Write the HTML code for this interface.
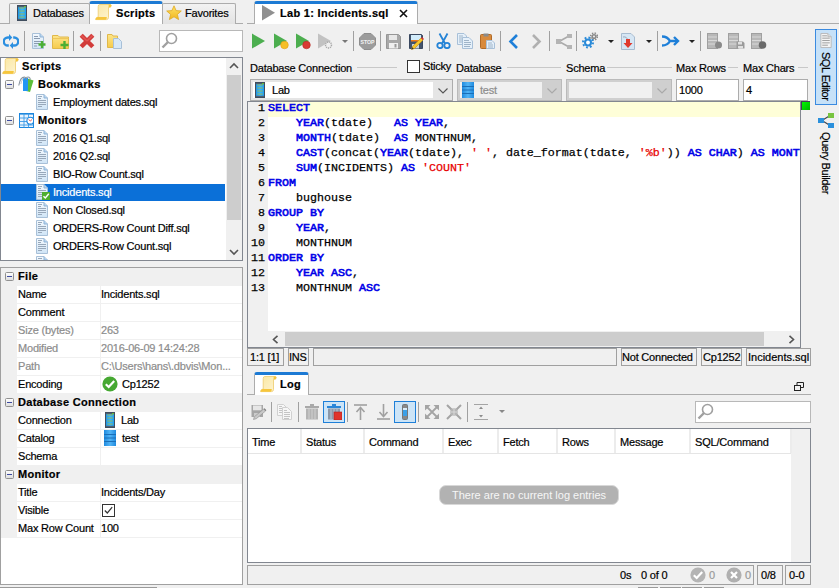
<!DOCTYPE html>
<html><head><meta charset="utf-8">
<style>
*{box-sizing:border-box;margin:0;padding:0}
html,body{width:839px;height:588px;overflow:hidden;background:#f0f0f0;font-family:"Liberation Sans",sans-serif;font-size:11px;color:#000;position:relative}
.a{position:absolute}
.t{position:absolute;white-space:pre;line-height:14px;letter-spacing:-0.2px;-webkit-text-stroke:0.2px}
.b{font-weight:bold;letter-spacing:0.3px}
.bb{font-weight:bold;letter-spacing:0.3px}
.sep{position:absolute;width:1px;background:#a0a0a0}
svg{position:absolute;overflow:visible}
.tab{position:absolute;border:1px solid #acacac;border-bottom:none;background:linear-gradient(#f2f2f2,#e3e3e3);border-radius:2px 2px 0 0}
.tabA{position:absolute;background:#fff;border:1px solid #acacac;border-bottom:none;border-top:3px solid #1c7ad4;border-radius:3px 3px 0 0}
.code{position:absolute;left:0;white-space:pre;font-family:"Liberation Mono",monospace;font-size:11.67px;line-height:15px;color:#000;-webkit-text-stroke:0.25px}
.code b{font-weight:normal;letter-spacing:0;-webkit-text-stroke:0.6px}
.lnum{position:absolute;left:248px;width:17px;text-align:right;font-family:"Liberation Mono",monospace;font-size:11.67px;line-height:15px;color:#000;-webkit-text-stroke:0.25px}
.kw{color:#0000e8}
.str{color:#e80000}
.cell{position:absolute;border:1px solid #a0a0a0;height:18px}
.cbx{position:absolute;border:1px solid #acacac;background:#fff}
.lbl{position:absolute;white-space:pre;line-height:14px;letter-spacing:-0.2px;-webkit-text-stroke:0.2px}
.hl{position:absolute;height:1px;background:#c8c8c8}
.th{position:absolute;top:429px;height:24px;border-right:1px solid #e5e5e5}
</style></head><body>

<svg width="0" height="0" style="position:absolute">
<defs>
<linearGradient id="gfile" x1="0" y1="0" x2="0" y2="1"><stop offset="0" stop-color="#f4f9fe"/><stop offset="1" stop-color="#cfe4f6"/></linearGradient>
<linearGradient id="gscroll" x1="0" y1="0" x2="1" y2="1"><stop offset="0" stop-color="#fbe7a0"/><stop offset="1" stop-color="#fdf4d4"/></linearGradient>
<linearGradient id="gbtn" x1="0" y1="0" x2="0" y2="1"><stop offset="0" stop-color="#ffffff"/><stop offset="1" stop-color="#dcdcdc"/></linearGradient>
<linearGradient id="gfold" x1="0" y1="0" x2="0" y2="1"><stop offset="0" stop-color="#fde68a"/><stop offset="1" stop-color="#f6c94a"/></linearGradient>
<symbol id="ifile" viewBox="0 0 12 16">
 <path d="M0.5 0.5H8L11.5 4V15.5H0.5Z" fill="url(#gfile)" stroke="#a8c0d8"/>
 <path d="M8 0.5V4H11.5" fill="#b9d6f0" stroke="#8fb3d6"/>
 <path d="M2 2.5h4M2 4.5h3M2 6.5h8M2 8.5h8M2 10.5h8M2 12.5h4" stroke="#98a8ba" stroke-width="1"/>
</symbol>
<symbol id="icheck" viewBox="0 0 8 8">
 <rect x="0" y="0" width="8" height="8" fill="#4fae2f"/>
 <path d="M1.5 4.2L3.3 6L6.8 1.8" fill="none" stroke="#fff" stroke-width="1.4"/>
</symbol>
<symbol id="iscroll" viewBox="0 0 17 17">
 <path d="M4.5 0.5H15.5Q16.6 0.7 16 2.2L15.4 3.2H13.5V13.2Q13.5 15.6 11.5 15.6H0.6L1 14.2Q1.4 13.2 3.2 13.2V2.5Q3.4 0.5 4.5 0.5Z" fill="url(#gscroll)" stroke="#efcf78" stroke-width="0.9"/>
 <path d="M0.6 15.8L1 14.2Q1.4 13 3.2 13H11.8Q11.8 15.8 10.5 15.8Z" fill="#f6c63c"/>
 <path d="M13.6 0.5H15.6Q16.7 0.8 16.1 2.2L15.5 3.3H13.6Z" fill="#f6c63c"/>
</symbol>
<symbol id="ibook" viewBox="0 0 16 16">
 <path d="M9.5 2.5L15.5 4.5L12 16L8 15Z" fill="#5cbf3a"/>
 <path d="M5 2H10V15H5Z" fill="#2196f3"/>
 <path d="M0.8 9.5C1.5 5 3.5 0.8 7 1.2C8.5 1.4 8.6 2.6 7.8 3.6" fill="none" stroke="#8c96a0" stroke-width="1.1"/>
 <path d="M8.2 1.6C10 0.6 12.6 0.8 12.2 3.8" fill="none" stroke="#8c96a0" stroke-width="1.1"/>
 <path d="M2.8 8C3.5 4.5 5 2.5 6.5 2.2" fill="none" stroke="#b4bcc4" stroke-width="0.9"/>
</symbol>
<symbol id="imon" viewBox="0 0 15 15">
 <rect x="0.5" y="0.5" width="14" height="14" fill="#eaf4fd" stroke="#1b86de"/>
 <rect x="0" y="0" width="15" height="1.6" fill="#1b86de"/>
 <path d="M0.5 5h14M0.5 8.5h14M0.5 12h14M5 0.5v14M9.5 0.5v14" stroke="#3d9ae6" stroke-width="0.9"/>
 <circle cx="11.3" cy="7.7" r="3.4" fill="#fff" stroke="#1b86de" stroke-width="1.1"/>
 <path d="M9.6 6.6L11.3 7.9L13 6.6" fill="none" stroke="#e05a5a" stroke-width="1"/>
</symbol>
<symbol id="iminus" viewBox="0 0 9 9">
 <rect x="0.5" y="0.5" width="8" height="8" rx="1" fill="url(#gbtn)" stroke="#909090"/>
 <path d="M2 4.5h5" stroke="#3c4aa0" stroke-width="1"/>
</symbol>
</defs></svg>
<svg width="0" height="0" style="position:absolute">
<defs>
<linearGradient id="gdb" x1="0" y1="0" x2="1" y2="0"><stop offset="0" stop-color="#1f8be0"/><stop offset="0.5" stop-color="#52b4f5"/><stop offset="1" stop-color="#1f8be0"/></linearGradient>
<linearGradient id="gsrv" x1="0" y1="0" x2="1" y2="0"><stop offset="0" stop-color="#1e90e0"/><stop offset="0.5" stop-color="#3ab8fa"/><stop offset="1" stop-color="#1a9af0"/></linearGradient>
<symbol id="icircheck" viewBox="0 0 16 16">
 <circle cx="8" cy="8" r="7.6" fill="#46a832"/>
 <path d="M3.8 8.2L6.7 11L12.2 5" fill="none" stroke="#fff" stroke-width="2.2"/>
</symbol>
<symbol id="iserver" viewBox="0 0 10 16">
 <rect x="0.5" y="0.5" width="9" height="15" fill="url(#gsrv)" stroke="#3f4d5e"/>
 <rect x="1" y="1" width="8" height="1.2" fill="#4f5f70"/>
 <rect x="1" y="13.8" width="8" height="1.2" fill="#4f5f70"/>
 <path d="M2.2 3h5.6M2.2 6h5.6M2.2 9h5.6M2.2 12h5.6" stroke="#a3b84a" stroke-width="0.9"/>
 <circle cx="8" cy="1.8" r="0.7" fill="#8f0"/>
</symbol>
<symbol id="idb" viewBox="0 0 12 16">
 <rect x="0" y="0" width="12" height="16" fill="url(#gdb)"/>
 <path d="M0 4.5h12M0 8h12M0 11.5h12" stroke="#1a6fb8" stroke-width="1"/>
</symbol>
<symbol id="icb" viewBox="0 0 13 13">
 <rect x="0.5" y="0.5" width="12" height="12" fill="#fff" stroke="#333"/>
 <path d="M2.8 6.5L5.3 9L10.2 3.2" fill="none" stroke="#333" stroke-width="1.2"/>
</symbol>
</defs></svg>

<svg width="0" height="0" style="position:absolute">
<defs>
<linearGradient id="gstar" x1="0" y1="0" x2="0" y2="1"><stop offset="0" stop-color="#fde36a"/><stop offset="1" stop-color="#f2b61c"/></linearGradient>
<linearGradient id="gfolder" x1="0" y1="0" x2="0" y2="1"><stop offset="0" stop-color="#fde58a"/><stop offset="1" stop-color="#f6cb4c"/></linearGradient>
<symbol id="istar" viewBox="0 0 16 16">
 <path d="M8 0.8L10.1 5.6L15.3 6L11.4 9.4L12.6 14.6L8 11.8L3.4 14.6L4.6 9.4L0.7 6L5.9 5.6Z" fill="url(#gstar)" stroke="#e0a820" stroke-width="0.8"/>
</symbol>
<symbol id="irefresh" viewBox="0 0 16 16">
 <path d="M6.2 3.5H4.8A4 4 0 0 0 4.8 11.5H5.8" fill="none" stroke="#2b8fe0" stroke-width="2.3"/>
 <path d="M9.8 11.5H11.2A4 4 0 0 0 11.2 3.5H10.2" fill="none" stroke="#2b8fe0" stroke-width="2.3"/>
 <path d="M6 0L9.3 3.5L6 7Z" fill="#2b8fe0"/>
 <path d="M10 8L6.7 11.5L10 15Z" fill="#2b8fe0"/>
</symbol>
<symbol id="inewfile" viewBox="0 0 14 16">
 <path d="M0.5 0.5H8L11.5 4V15.5H0.5Z" fill="url(#gfile)" stroke="#a8c0d8"/>
 <path d="M8 0.5V4H11.5" fill="#b9d6f0" stroke="#8fb3d6"/>
 <path d="M2 3.5h4M2 5.5h6M2 8.5h7M2 10.5h5M2 13h3" stroke="#8b9bb0"/>
 <path d="M6.5 11.5h7M10 8v7" stroke="#4caf35" stroke-width="2.4"/>
</symbol>
<symbol id="inewfolder" viewBox="0 0 17 15">
 <path d="M0.5 1.5H6L7.5 3H16.5V14.5H0.5Z" fill="url(#gfolder)" stroke="#e0b84a"/>
 <path d="M0.5 4.5H16.5" stroke="#eec65a"/>
 <path d="M8.5 11h8M12.5 7v8" stroke="#4caf35" stroke-width="2.4"/>
</symbol>
<symbol id="ix" viewBox="0 0 16 16">
 <path d="M2.2 2.2L13.8 13.8M13.8 2.2L2.2 13.8" stroke="#d23c3a" stroke-width="4.4"/>
 <path d="M2.2 2.2L8 8M13.8 2.2L8 8" stroke="#e25552" stroke-width="1.6"/>
</symbol>
<symbol id="icopyfolder" viewBox="0 0 15 16">
 <path d="M0.5 1.5H5L6 3H10.5V14.5H0.5Z" fill="url(#gfolder)" stroke="#e0b84a"/>
 <path d="M6.5 5.5H11.5L14.5 8.5V15.5H6.5Z" fill="#d6e8f8" stroke="#a8c0d8"/>
</symbol>
<symbol id="isearch" viewBox="0 0 17 17">
 <circle cx="10.5" cy="6.5" r="5" fill="#fff" stroke="#a0a0a0" stroke-width="1.6"/>
 <path d="M7 10L1.5 15.5" stroke="#a0a0a0" stroke-width="2.4"/>
</symbol>
</defs></svg>

<svg width="0" height="0" style="position:absolute">
<defs>
<symbol id="isave" viewBox="0 0 15 15">
 <path d="M0.5 0.5H12.5L14.5 2.5V14.5H0.5Z" fill="#a8a8a8" stroke="#969696"/>
 <rect x="3" y="1" width="8" height="5" fill="#e8e8e8"/>
 <rect x="3" y="9" width="9" height="5.5" fill="#f0f0f0"/>
 <rect x="8.5" y="10" width="2" height="3.5" fill="#9a9a9a"/>
</symbol>
<symbol id="isaveedit" viewBox="0 0 16 16">
 <path d="M0.5 0.5H12.5L13.5 1.5V14.5H0.5Z" fill="#44546c" stroke="#3a4860"/>
 <rect x="2" y="1" width="10" height="5" fill="#d2ecfb"/>
 <rect x="2" y="6" width="10" height="1.5" fill="#f07a1a"/>
 <rect x="3" y="10" width="7" height="4.5" fill="#c8d0da"/>
 <path d="M2.5 15.5L3.5 12.5L12 4L14 6L5.5 14.5Z" fill="#f7c52a" stroke="#c08a10" stroke-width="0.6"/>
 <path d="M12 4L13 3L15 5L14 6Z" fill="#d83030"/>
 <path d="M2.5 15.5L3.2 13.2L4.8 14.8Z" fill="#333"/>
</symbol>
<symbol id="icut" viewBox="0 0 15 16">
 <path d="M3.5 0.5L9 10.5M11.5 0.5L6 10.5" stroke="#2483d6" stroke-width="1.8"/>
 <circle cx="4" cy="12.5" r="2.7" fill="none" stroke="#2483d6" stroke-width="1.8"/>
 <circle cx="11" cy="12.5" r="2.7" fill="none" stroke="#2483d6" stroke-width="1.8"/>
</symbol>
<symbol id="icopy" viewBox="0 0 16 16">
 <path d="M0.5 0.5H7L9.5 3V11.5H0.5Z" fill="#e5f0fa" stroke="#a8c0d8"/>
 <path d="M2 3h4M2 5h6M2 7h6M2 9h5" stroke="#9fb4c8"/>
 <path d="M5.5 4.5H12L15.5 8V15.5H5.5Z" fill="#e5f0fa" stroke="#a8c0d8"/>
 <path d="M7 7.5h5M7 9.5h7M7 11.5h7M7 13.5h6" stroke="#9fb4c8"/>
</symbol>
<symbol id="ipaste" viewBox="0 0 15 16">
 <rect x="0.5" y="1.5" width="11" height="14" rx="1" fill="#d88a3c" stroke="#b06a28"/>
 <rect x="3.5" y="0.5" width="5" height="3" fill="#8a8a8a"/>
 <path d="M6.5 7.5H12L14.5 10V15.5H6.5Z" fill="#e5f0fa" stroke="#a8c0d8"/>
 <path d="M8 10h4M8 12h5M8 14h5" stroke="#9fb4c8"/>
</symbol>
<symbol id="igears" viewBox="0 0 16 17">
 <circle cx="12" cy="4.5" r="2.6" fill="#8a8a8a"/>
 <circle cx="12" cy="4.5" r="3.4" fill="none" stroke="#8a8a8a" stroke-width="1.6" stroke-dasharray="1.4 1.3"/>
 <circle cx="12" cy="4.5" r="1" fill="#f0f0f0"/>
 <circle cx="6" cy="10.5" r="4" fill="#2a8ad8"/>
 <circle cx="6" cy="10.5" r="5" fill="none" stroke="#2a8ad8" stroke-width="2" stroke-dasharray="1.8 2.1"/>
 <circle cx="6" cy="10.5" r="1.9" fill="#fff"/>
</symbol>
<symbol id="iexport" viewBox="0 0 14 17">
 <path d="M0.5 0.5H10L13.5 4V16.5H0.5Z" fill="#d6e6f4" stroke="#a8bcd0"/>
 <path d="M2 4Q6 3 7 8" fill="none" stroke="#9ab" stroke-width="1"/>
 <path d="M5 6H9V10H11.5L7 15L2.5 10H5Z" fill="#e03a2e"/>
</symbol>
<symbol id="idbg1" viewBox="0 0 15 16">
 <rect x="0.5" y="0.5" width="10" height="15" fill="#b8b8b8" stroke="#a0a0a0"/>
 <path d="M1 4h9M1 7.5h9M1 11h9" stroke="#d8d8d8"/>
 <circle cx="11.5" cy="12" r="3.5" fill="#8a8a8a"/>
</symbol>
<symbol id="idbg2" viewBox="0 0 17 16">
 <rect x="0.5" y="0.5" width="10" height="15" fill="#b8b8b8" stroke="#a0a0a0"/>
 <path d="M1 4h9M1 7.5h9M1 11h9" stroke="#d8d8d8"/>
 <path d="M8.5 8.5H15L16.5 10V15.5H8.5Z" fill="#9a9a9a"/>
 <rect x="10" y="9" width="4" height="2.5" fill="#e0e0e0"/>
 <rect x="10" y="13" width="5" height="2.5" fill="#e0e0e0"/>
</symbol>
<symbol id="idbg3" viewBox="0 0 16 16">
 <rect x="0.5" y="0.5" width="10" height="15" fill="#b8b8b8" stroke="#a0a0a0"/>
 <path d="M1 4h9M1 7.5h9M1 11h9" stroke="#d8d8d8"/>
 <circle cx="11.5" cy="12" r="3.8" fill="#6a6a6a"/>
</symbol>
<symbol id="iqb" viewBox="0 0 16 15">
 <path d="M4 7.5L12 2.5M4 7.5L12 12.5" stroke="#3a4450" stroke-width="1.1"/>
 <rect x="0" y="5" width="6" height="5" fill="#2a90dc"/>
 <rect x="10" y="0" width="6" height="5" fill="#78c440"/>
 <rect x="10" y="10" width="6" height="5" fill="#2a90dc"/>
</symbol>
<symbol id="ilogcut" viewBox="0 0 16 16">
 <rect x="0" y="0" width="16" height="16" fill="none"/>
</symbol>
</defs></svg>
<svg width="0" height="0" style="position:absolute">
<defs>
<symbol id="isaveeditg" viewBox="0 0 16 16">
 <rect x="0.5" y="1" width="11.5" height="12" fill="#a6a6a6"/>
 <rect x="2" y="1.5" width="8.5" height="4.5" fill="#e6e6e6"/>
 <rect x="2" y="6" width="8.5" height="1" fill="#b8b8b8"/>
 <rect x="3" y="9" width="6" height="4" fill="#cccccc"/>
 <path d="M2.5 15.5L3.3 12.8L12.6 5L14.6 7L5.3 14.7Z" fill="#c8c8c8" stroke="#8e8e8e" stroke-width="0.6"/>
 <path d="M12.6 5L13.6 4.2L15.4 6.2L14.6 7Z" fill="#7a7a7a"/>
</symbol>
<symbol id="icopyg" viewBox="0 0 16 16">
 <path d="M0.5 0.5H6.5L9.5 3.5V11.5H0.5Z" fill="#f6f6f6" stroke="#d0d0d0"/>
 <path d="M2 2.5h3M2 4.5h3M2 6.5h3M2 8.5h3" stroke="#c4c4c4" stroke-width="1"/>
 <path d="M5.5 3.5H10.5L14.5 7.5V15.5H5.5Z" fill="#f6f6f6" stroke="#d0d0d0"/>
 <path d="M7 6.5h3M7 8.5h6M7 10.5h6M7 12.5h6M7 14.5h5" stroke="#c4c4c4" stroke-width="1"/>
</symbol>
<symbol id="itrash" viewBox="0 0 14 16">
 <rect x="0" y="2" width="14" height="2" fill="#a8a8a8"/>
 <rect x="5" y="0" width="4" height="2" fill="#a8a8a8"/>
 <path d="M1 4.5H13V15.5H1Z" fill="#b4b4b4"/>
 <path d="M4 5v10M7 5v10M10 5v10" stroke="#d0d0d0"/>
</symbol>
<symbol id="itrashred" viewBox="0 0 15 16">
 <rect x="0" y="2" width="14" height="2" fill="#2a86d8"/>
 <rect x="5" y="0" width="4" height="2" fill="#2a86d8"/>
 <path d="M1 4.5H13V15.5H1Z" fill="#8c98a8"/>
 <path d="M4 5v10M7 5v10M10 5v10" stroke="#b8c4d2"/>
 <rect x="7" y="8" width="8" height="8" fill="#e0332a" stroke="#b02020" stroke-width="0.6"/>
</symbol>
</defs></svg>

<!-- ============ LEFT TAB STRIP ============ -->
<div class="a" style="left:0;top:23px;width:243px;height:1px;background:#acacac"></div>
<div class="tab" style="left:9px;top:3px;width:81px;height:21px"></div>
<div class="tab" style="left:162px;top:3px;width:74px;height:21px"></div>
<div class="tabA" style="left:89px;top:1px;width:74px;height:23px"></div>
<svg style="left:17px;top:5px" width="10" height="16"><use href="#iserver"/></svg>
<span class="t" style="left:33px;top:6px">Databases</span>
<svg style="left:95px;top:4px" width="17" height="17"><use href="#iscroll"/></svg>
<span class="t b" style="left:116px;top:6px">Scripts</span>
<svg style="left:166px;top:5px" width="16" height="16"><use href="#istar"/></svg>
<span class="t" style="left:185px;top:6px">Favorites</span>

<!-- left toolbar -->
<svg style="left:3px;top:34px" width="16" height="16"><use href="#irefresh"/></svg>
<div class="sep" style="left:24px;top:31px;height:20px"></div>
<svg style="left:32px;top:33px" width="14" height="16"><use href="#inewfile"/></svg>
<svg style="left:52px;top:34px" width="17" height="15"><use href="#inewfolder"/></svg>
<div class="sep" style="left:73px;top:31px;height:20px"></div>
<svg style="left:79px;top:33px" width="16" height="16"><use href="#ix"/></svg>
<div class="sep" style="left:100px;top:31px;height:20px"></div>
<svg style="left:107px;top:33px" width="15" height="16"><use href="#icopyfolder"/></svg>
<div class="a" style="left:159px;top:30px;width:84px;height:22px;background:#fff;border:1px solid #b8b8b8"></div>
<svg style="left:161px;top:32px" width="17" height="17"><use href="#isearch"/></svg>

<!-- tree panel -->
<div class="a" style="left:0;top:57px;width:243px;height:204px;background:#fff;border:1px solid #828790"></div>
<div class="a" style="left:226px;top:58px;width:16px;height:202px;background:#f0f0f0"></div>
<div class="a" style="left:227px;top:75px;width:14px;height:145px;background:#cdcdcd"></div>
<svg style="left:229px;top:62px" width="10" height="8"><path d="M1 6L5 2L9 6" fill="none" stroke="#555" stroke-width="1.6"/></svg>
<svg style="left:229px;top:248px" width="10" height="8"><path d="M1 2L5 6L9 2" fill="none" stroke="#555" stroke-width="1.6"/></svg>

<!-- properties panel -->
<div class="a" style="left:0;top:267px;width:243px;height:318px;background:#fff;border:1px solid #a0a0a0"></div>
<div class="a" style="left:0;top:587px;width:157px;height:1px;background:#9a9a9a"></div>

<div class="a" style="left:1px;top:58px;width:225px;height:202px;overflow:hidden">
<svg style="left:1px;top:-0.5px" width="17" height="17"><use href="#iscroll"/></svg>
<span class="t b" style="left:21px;top:1px">Scripts</span>
<svg style="left:17px;top:18px" width="16" height="16"><use href="#ibook"/></svg>
<svg style="left:4px;top:22px" width="9" height="9"><use href="#iminus"/></svg>
<span class="t b" style="left:37px;top:19px">Bookmarks</span>
<svg style="left:35px;top:36px" width="12" height="16"><use href="#ifile"/></svg>
<span class="t" style="left:52px;top:37px">Employment dates.sql</span>
<svg style="left:18px;top:55px" width="15" height="15"><use href="#imon"/></svg>
<svg style="left:4px;top:58px" width="9" height="9"><use href="#iminus"/></svg>
<span class="t b" style="left:37px;top:55px">Monitors</span>
<svg style="left:35px;top:72px" width="12" height="16"><use href="#ifile"/></svg>
<span class="t" style="left:52px;top:73px">2016 Q1.sql</span>
<svg style="left:35px;top:90px" width="12" height="16"><use href="#ifile"/></svg>
<span class="t" style="left:52px;top:91px">2016 Q2.sql</span>
<svg style="left:35px;top:108px" width="12" height="16"><use href="#ifile"/></svg>
<span class="t" style="left:52px;top:109px">BIO-Row Count.sql</span>
<div class="a" style="left:0;top:126px;width:224px;height:17px;background:#0b70d8"></div>
<svg style="left:35px;top:126px" width="12" height="16"><use href="#ifile"/></svg>
<svg style="left:41px;top:134px" width="8" height="8"><use href="#icheck"/></svg>
<span class="t" style="left:52px;top:127px;color:#fff">Incidents.sql</span>
<svg style="left:35px;top:144px" width="12" height="16"><use href="#ifile"/></svg>
<span class="t" style="left:52px;top:145px">Non Closed.sql</span>
<svg style="left:35px;top:162px" width="12" height="16"><use href="#ifile"/></svg>
<span class="t" style="left:52px;top:163px">ORDERS-Row Count Diff.sql</span>
<svg style="left:35px;top:180px" width="12" height="16"><use href="#ifile"/></svg>
<span class="t" style="left:52px;top:181px">ORDERS-Row Count.sql</span>
<svg style="left:35px;top:198px" width="12" height="16"><use href="#ifile"/></svg>
<span class="t" style="left:52px;top:199px">SCHEDULED.sql</span>
</div>
<div class="a" style="left:1px;top:268px;width:241px;height:316px;overflow:hidden">
<div class="a" style="left:0;top:0px;width:241px;height:18px;background:#f0f0f0"></div>
<svg style="left:4px;top:4px" width="9" height="9"><use href="#iminus"/></svg>
<span class="t bb" style="left:17px;top:1px">File</span>
<div class="a" style="left:0;top:18px;width:16px;height:18px;background:#f0f0f0"></div>
<div class="a" style="left:16px;top:35px;width:225px;height:1px;background:#f0f0f0"></div>
<div class="a" style="left:99px;top:18px;width:1px;height:17px;background:#f0f0f0"></div>
<span class="t" style="left:17px;top:19px">Name</span>
<span class="t" style="left:100px;top:19px">Incidents.sql</span>
<div class="a" style="left:0;top:36px;width:16px;height:18px;background:#f0f0f0"></div>
<div class="a" style="left:16px;top:53px;width:225px;height:1px;background:#f0f0f0"></div>
<div class="a" style="left:99px;top:36px;width:1px;height:17px;background:#f0f0f0"></div>
<span class="t" style="left:17px;top:37px">Comment</span>
<div class="a" style="left:0;top:54px;width:16px;height:18px;background:#f0f0f0"></div>
<div class="a" style="left:16px;top:71px;width:225px;height:1px;background:#f0f0f0"></div>
<div class="a" style="left:99px;top:54px;width:1px;height:17px;background:#f0f0f0"></div>
<span class="t" style="left:17px;top:55px;color:#8c8c8c">Size (bytes)</span>
<span class="t" style="left:100px;top:55px;color:#8c8c8c">263</span>
<div class="a" style="left:0;top:72px;width:16px;height:18px;background:#f0f0f0"></div>
<div class="a" style="left:16px;top:89px;width:225px;height:1px;background:#f0f0f0"></div>
<div class="a" style="left:99px;top:72px;width:1px;height:17px;background:#f0f0f0"></div>
<span class="t" style="left:17px;top:73px;color:#8c8c8c">Modified</span>
<span class="t" style="left:100px;top:73px;color:#8c8c8c">2016-06-09 14:24:28</span>
<div class="a" style="left:0;top:90px;width:16px;height:18px;background:#f0f0f0"></div>
<div class="a" style="left:16px;top:107px;width:225px;height:1px;background:#f0f0f0"></div>
<div class="a" style="left:99px;top:90px;width:1px;height:17px;background:#f0f0f0"></div>
<span class="t" style="left:17px;top:91px;color:#8c8c8c">Path</span>
<span class="t" style="left:100px;top:91px;color:#8c8c8c">C:\Users\hans\.dbvis\Mon...</span>
<div class="a" style="left:0;top:108px;width:16px;height:18px;background:#f0f0f0"></div>
<div class="a" style="left:16px;top:125px;width:225px;height:1px;background:#f0f0f0"></div>
<div class="a" style="left:99px;top:108px;width:1px;height:17px;background:#f0f0f0"></div>
<span class="t" style="left:17px;top:109px">Encoding</span>
<svg style="left:101px;top:108px" width="16" height="16"><use href="#icircheck"/></svg>
<span class="t" style="left:121px;top:109px">Cp1252</span>
<div class="a" style="left:0;top:126px;width:241px;height:18px;background:#f0f0f0"></div>
<svg style="left:4px;top:130px" width="9" height="9"><use href="#iminus"/></svg>
<span class="t bb" style="left:17px;top:127px">Database Connection</span>
<div class="a" style="left:0;top:144px;width:16px;height:18px;background:#f0f0f0"></div>
<div class="a" style="left:16px;top:161px;width:225px;height:1px;background:#f0f0f0"></div>
<div class="a" style="left:99px;top:144px;width:1px;height:17px;background:#f0f0f0"></div>
<span class="t" style="left:17px;top:145px">Connection</span>
<svg style="left:104px;top:144px" width="10" height="16"><use href="#iserver"/></svg>
<span class="t" style="left:120px;top:145px">Lab</span>
<div class="a" style="left:0;top:162px;width:16px;height:18px;background:#f0f0f0"></div>
<div class="a" style="left:16px;top:179px;width:225px;height:1px;background:#f0f0f0"></div>
<div class="a" style="left:99px;top:162px;width:1px;height:17px;background:#f0f0f0"></div>
<span class="t" style="left:17px;top:163px">Catalog</span>
<svg style="left:103px;top:162px" width="12" height="16"><use href="#idb"/></svg>
<span class="t" style="left:121px;top:163px">test</span>
<div class="a" style="left:0;top:180px;width:16px;height:18px;background:#f0f0f0"></div>
<div class="a" style="left:16px;top:197px;width:225px;height:1px;background:#f0f0f0"></div>
<div class="a" style="left:99px;top:180px;width:1px;height:17px;background:#f0f0f0"></div>
<span class="t" style="left:17px;top:181px">Schema</span>
<div class="a" style="left:0;top:198px;width:241px;height:18px;background:#f0f0f0"></div>
<svg style="left:4px;top:202px" width="9" height="9"><use href="#iminus"/></svg>
<span class="t bb" style="left:17px;top:199px">Monitor</span>
<div class="a" style="left:0;top:216px;width:16px;height:18px;background:#f0f0f0"></div>
<div class="a" style="left:16px;top:233px;width:225px;height:1px;background:#f0f0f0"></div>
<div class="a" style="left:99px;top:216px;width:1px;height:17px;background:#f0f0f0"></div>
<span class="t" style="left:17px;top:217px">Title</span>
<span class="t" style="left:100px;top:217px">Incidents/Day</span>
<div class="a" style="left:0;top:234px;width:16px;height:18px;background:#f0f0f0"></div>
<div class="a" style="left:16px;top:251px;width:225px;height:1px;background:#f0f0f0"></div>
<div class="a" style="left:99px;top:234px;width:1px;height:17px;background:#f0f0f0"></div>
<span class="t" style="left:17px;top:235px">Visible</span>
<svg style="left:101px;top:236px" width="13" height="13"><use href="#icb"/></svg>
<div class="a" style="left:0;top:252px;width:16px;height:18px;background:#f0f0f0"></div>
<div class="a" style="left:16px;top:269px;width:225px;height:1px;background:#f0f0f0"></div>
<div class="a" style="left:99px;top:252px;width:1px;height:17px;background:#f0f0f0"></div>
<span class="t" style="left:17px;top:253px">Max Row Count</span>
<span class="t" style="left:100px;top:253px">100</span>
</div>
<!-- ============ RIGHT TAB STRIP ============ -->
<div class="a" style="left:247px;top:23px;width:592px;height:1px;background:#acacac"></div>
<div class="tabA" style="left:254px;top:1px;width:164px;height:23px"></div>
<svg style="left:262px;top:5px" width="13" height="16"><path d="M0 0L13 7.8L0 15.6Z" fill="#909090"/></svg>
<span class="t b" style="left:280px;top:6px">Lab 1: Incidents.sql</span>
<svg style="left:399px;top:9px" width="9" height="9"><path d="M1 1L8 8M8 1L1 8" stroke="#111" stroke-width="1.6"/></svg>

<!-- right toolbar -->
<svg style="left:252px;top:33px" width="13" height="16"><path d="M0 0.6L13 8.1L0 15.6Z" fill="#4cae4f"/></svg>
<svg style="left:274px;top:33px" width="15" height="16"><path d="M0 0.6L13 8.1L0 15.6Z" fill="#4cae4f"/><circle cx="10.5" cy="12" r="3.8" fill="#f6bf26" stroke="#e29e10" stroke-width="0.6"/></svg>
<svg style="left:296px;top:33px" width="15" height="16"><path d="M0 0.6L13 8.1L0 15.6Z" fill="#4cae4f"/><circle cx="10.5" cy="12" r="3.8" fill="#d83a34" stroke="#b52a25" stroke-width="0.6"/></svg>
<svg style="left:318px;top:33px" width="15" height="16"><path d="M0 0.6L13 8.1L0 15.6Z" fill="#c2c2c2"/><circle cx="10.5" cy="12" r="3" fill="#f0f0f0" stroke="#a8a8a8" stroke-width="1.4" stroke-dasharray="1.2 0.8"/></svg>
<svg style="left:342px;top:40px" width="6" height="3"><path d="M0 0H6L3 3Z" fill="#777"/></svg>
<div class="sep" style="left:353px;top:31px;height:20px"></div>
<svg style="left:359px;top:33px" width="17" height="17"><path d="M5 0.5H12L16.5 5V12L12 16.5H5L0.5 12V5Z" fill="#9c9c9c" stroke="#8e8e8e"/><text x="8.5" y="10.5" font-family="Liberation Sans" font-weight="bold" font-size="5.2" fill="#f4f4f4" text-anchor="middle">STOP</text></svg>
<div class="sep" style="left:380px;top:31px;height:20px"></div>
<svg style="left:386px;top:34px" width="15" height="15"><use href="#isave"/></svg>
<svg style="left:409px;top:34px" width="16" height="16"><use href="#isaveedit"/></svg>
<div class="sep" style="left:429px;top:31px;height:20px"></div>
<svg style="left:436px;top:33px" width="15" height="16"><use href="#icut"/></svg>
<svg style="left:457px;top:33px" width="16" height="16"><use href="#icopy"/></svg>
<svg style="left:480px;top:33px" width="15" height="16"><use href="#ipaste"/></svg>
<div class="sep" style="left:500px;top:31px;height:20px"></div>
<svg style="left:508px;top:34px" width="11" height="15"><path d="M9 1L2.5 7.5L9 14" fill="none" stroke="#1e7fd8" stroke-width="2.6"/></svg>
<svg style="left:531px;top:34px" width="11" height="15"><path d="M2 1L8.5 7.5L2 14" fill="none" stroke="#b0b0b0" stroke-width="2.6"/></svg>
<div class="sep" style="left:549px;top:31px;height:20px"></div>
<svg style="left:555px;top:34px" width="17" height="15"><path d="M14 2L4 7.5L14 13" fill="none" stroke="#aaa" stroke-width="1.6"/><rect x="1" y="5" width="5" height="5" fill="#b4b4b4"/><rect x="12" y="0" width="5" height="4" fill="#b4b4b4"/><rect x="12" y="11" width="5" height="4" fill="#b4b4b4"/></svg>
<div class="sep" style="left:576px;top:31px;height:20px"></div>
<svg style="left:582px;top:32px" width="16" height="17"><use href="#igears"/></svg>
<svg style="left:608px;top:40px" width="6" height="3"><path d="M0 0H6L3 3Z" fill="#222"/></svg>
<svg style="left:621px;top:33px" width="14" height="17"><use href="#iexport"/></svg>
<svg style="left:646px;top:40px" width="6" height="3"><path d="M0 0H6L3 3Z" fill="#222"/></svg>
<div class="sep" style="left:657px;top:31px;height:20px"></div>
<svg style="left:662px;top:35px" width="18" height="12"><path d="M0 1.5Q5.5 1.5 8 6Q5.5 10.5 0 10.5M8 6H15.5" fill="none" stroke="#1e7fd8" stroke-width="2.4"/><path d="M12 2L16 6L12 10" fill="none" stroke="#1e7fd8" stroke-width="2.4"/></svg>
<svg style="left:689px;top:40px" width="6" height="3"><path d="M0 0H6L3 3Z" fill="#222"/></svg>
<div class="sep" style="left:700px;top:31px;height:20px"></div>
<svg style="left:707px;top:33px" width="15" height="16"><use href="#idbg1"/></svg>
<svg style="left:728px;top:33px" width="17" height="16"><use href="#idbg2"/></svg>
<svg style="left:751px;top:33px" width="16" height="16"><use href="#idbg3"/></svg>

<!-- right vertical tabs -->
<div class="a" style="left:815px;top:29px;width:22px;height:76px;background:#c6e1f8;border:1px solid #3a8ae0"></div>
<svg style="left:820px;top:33px" width="12" height="15" viewBox="0 0 12 16"><path d="M0.5 0.5H8L11.5 4V15.5H0.5Z" fill="#f4f4f4" stroke="#b8b8b8"/><path d="M8 0.5V4H11.5" fill="#d8d8d8" stroke="#b8b8b8"/><path d="M2 3h5M2 5.5h8M2 8h8M2 10.5h8M2 13h6" stroke="#9c9c9c"/></svg>
<div class="a" style="left:819px;top:52px;width:14px;height:50px;overflow:visible">
 <span class="t" style="left:-18px;top:18px;width:50px;transform:rotate(90deg);transform-origin:25px 7px;letter-spacing:-0.5px">SQL Editor</span>
</div>
<svg style="left:818px;top:113px" width="16" height="15"><use href="#iqb"/></svg>
<div class="a" style="left:819px;top:132px;width:14px;height:66px;overflow:visible">
 <span class="t" style="left:-26px;top:26px;width:66px;transform:rotate(90deg);transform-origin:33px 7px;letter-spacing:-0.4px">Query Builder</span>
</div>

<!-- labels row -->
<span class="lbl" style="left:250px;top:61px">Database Connection</span>
<div class="hl" style="left:357px;top:67px;width:40px"></div>
<div class="a" style="left:407px;top:60px;width:13px;height:13px;border:1px solid #333;background:#fff"></div>
<span class="lbl" style="left:423px;top:59px">Sticky</span>
<span class="lbl" style="left:456px;top:61px">Database</span>
<div class="hl" style="left:507px;top:67px;width:54px"></div>
<span class="lbl" style="left:566px;top:61px">Schema</span>
<div class="hl" style="left:607px;top:67px;width:65px"></div>
<span class="lbl" style="left:676px;top:61px">Max Rows</span>
<div class="hl" style="left:728px;top:67px;width:10px"></div>
<span class="lbl" style="left:743px;top:61px">Max Chars</span>
<div class="hl" style="left:798px;top:67px;width:10px"></div>

<!-- combos -->
<div class="a" style="left:250px;top:79px;width:203px;height:22px;background:#e5e5e5;border:1px solid #acacac"></div>
<div class="a" style="left:253px;top:82px;width:180px;height:16px;background:#fff"></div>
<svg style="left:255px;top:82px" width="10" height="16"><use href="#iserver"/></svg>
<span class="lbl" style="left:272px;top:83px">Lab</span>
<svg style="left:438px;top:88px" width="10" height="6"><path d="M0.5 0.5L5 5L9.5 0.5" fill="none" stroke="#555" stroke-width="1.1"/></svg>

<div class="a" style="left:457px;top:79px;width:105px;height:22px;background:#cfcfcf;border:1px solid #bababa"></div>
<div class="a" style="left:460px;top:82px;width:82px;height:16px;background:#f0f0f0"></div>
<svg style="left:462px;top:82px" width="12" height="16"><use href="#idb"/></svg>
<span class="lbl" style="left:480px;top:83px;color:#8c8c8c">test</span>
<svg style="left:547px;top:88px" width="10" height="6"><path d="M0.5 0.5L5 5L9.5 0.5" fill="none" stroke="#a8a8a8" stroke-width="1.1"/></svg>

<div class="a" style="left:566px;top:79px;width:106px;height:22px;background:#cfcfcf;border:1px solid #bababa"></div>
<div class="a" style="left:569px;top:82px;width:83px;height:16px;background:#f0f0f0"></div>
<svg style="left:657px;top:88px" width="10" height="6"><path d="M0.5 0.5L5 5L9.5 0.5" fill="none" stroke="#a8a8a8" stroke-width="1.1"/></svg>

<div class="a" style="left:676px;top:79px;width:63px;height:22px;background:#fff;border:1px solid #acacac"></div>
<span class="lbl" style="left:679px;top:83px">1000</span>
<div class="a" style="left:743px;top:79px;width:65px;height:22px;background:#fff;border:1px solid #acacac"></div>
<span class="lbl" style="left:746px;top:83px">4</span>

<!-- editor frame -->
<div class="a" style="left:247px;top:101px;width:554px;height:247px;background:#fff;border:1px solid #828790;border-right:none"></div>
<div class="a" style="left:800px;top:101px;width:1px;height:247px;background:#828790"></div>
<div class="a" style="left:801px;top:101px;width:9px;height:9px;background:linear-gradient(135deg,#00f800,#00b400);border-top:1px solid #443c58;border-left:1px solid #443c58"></div>
<!-- h scrollbar -->
<div class="a" style="left:268px;top:331px;width:532px;height:16px;background:#f0f0f0"></div>
<div class="a" style="left:285px;top:332px;width:479px;height:14px;background:#cdcdcd"></div>
<svg style="left:272px;top:335px" width="7" height="9"><path d="M5.5 0.8L1.5 4.5L5.5 8.2" fill="none" stroke="#555" stroke-width="1.6"/></svg>
<svg style="left:788px;top:335px" width="7" height="9"><path d="M1.5 0.8L5.5 4.5L1.5 8.2" fill="none" stroke="#555" stroke-width="1.6"/></svg>

<!-- status bar -->
<div class="cell" style="left:247px;top:348px;width:37px"></div>
<span class="lbl" style="left:250px;top:350px">1:1 [1]</span>
<div class="cell" style="left:288px;top:348px;width:21px"></div>
<span class="lbl" style="left:289px;top:350px">INS</span>
<div class="cell" style="left:313px;top:348px;width:304px"></div>
<div class="cell" style="left:621px;top:348px;width:76px"></div>
<span class="lbl" style="left:622px;top:350px">Not Connected</span>
<div class="cell" style="left:701px;top:348px;width:41px"></div>
<span class="lbl" style="left:703px;top:350px">Cp1252</span>
<div class="cell" style="left:746px;top:348px;width:65px"></div>
<span class="lbl" style="left:748px;top:350px;letter-spacing:0">Incidents.sql</span>

<div class="a" style="left:248px;top:102px;width:20px;height:245px;background:#f0f0f0"></div>
<div class="a" style="left:268px;top:102px;width:532px;height:15px;background:#fefed8"></div>
<div class="a" style="left:268px;top:102px;width:532px;height:229px;overflow:hidden"><div class="a" style="left:0;top:-0.6px;width:532px;height:229px">
<div class="code" style="top:0px"><b class="kw">SELECT</b></div>
<div class="code" style="top:15px">    <b class="kw">YEAR</b>(tdate)   <b class="kw">AS</b> <b class="kw">YEAR</b>,</div>
<div class="code" style="top:30px">    <b class="kw">MONTH</b>(tdate)  <b class="kw">AS</b> MONTHNUM,</div>
<div class="code" style="top:45px">    <b class="kw">CAST</b>(concat(<b class="kw">YEAR</b>(tdate), <span class="str">' '</span>, date_format(tdate, <span class="str">'%b'</span>)) <b class="kw">AS</b> <b class="kw">CHAR</b>) <b class="kw">AS</b> <b class="kw">MONTHNAME</b>,</div>
<div class="code" style="top:60px">    <b class="kw">SUM</b>(INCIDENTS) <b class="kw">AS</b> <span class="str">'COUNT'</span></div>
<div class="code" style="top:75px"><b class="kw">FROM</b></div>
<div class="code" style="top:90px">    bughouse</div>
<div class="code" style="top:105px"><b class="kw">GROUP</b> <b class="kw">BY</b></div>
<div class="code" style="top:120px">    <b class="kw">YEAR</b>,</div>
<div class="code" style="top:135px">    MONTHNUM</div>
<div class="code" style="top:150px"><b class="kw">ORDER</b> <b class="kw">BY</b></div>
<div class="code" style="top:165px">    <b class="kw">YEAR</b> <b class="kw">ASC</b>,</div>
<div class="code" style="top:180px">    MONTHNUM <b class="kw">ASC</b></div>
</div></div>
<div class="lnum" style="top:101.4px">1</div>
<div class="lnum" style="top:116.4px">2</div>
<div class="lnum" style="top:131.4px">3</div>
<div class="lnum" style="top:146.4px">4</div>
<div class="lnum" style="top:161.4px">5</div>
<div class="lnum" style="top:176.4px">6</div>
<div class="lnum" style="top:191.4px">7</div>
<div class="lnum" style="top:206.4px">8</div>
<div class="lnum" style="top:221.4px">9</div>
<div class="lnum" style="top:236.4px">10</div>
<div class="lnum" style="top:251.4px">11</div>
<div class="lnum" style="top:266.4px">12</div>
<div class="lnum" style="top:281.4px">13</div>
<!-- ============ LOG ============ -->
<div class="a" style="left:247px;top:394px;width:564px;height:1px;background:#acacac"></div>
<div class="tabA" style="left:254px;top:372px;width:55px;height:23px"></div>
<svg style="left:260px;top:376px" width="17" height="17"><use href="#iscroll"/></svg>
<span class="t b" style="left:280px;top:377px">Log</span>
<svg style="left:794px;top:382px" width="10" height="9"><rect x="0.5" y="3.5" width="6" height="5" fill="none" stroke="#222"/><path d="M3 3.5V0.5H9.5V5.5H6.5" fill="none" stroke="#222"/></svg>

<!-- log toolbar -->
<svg style="left:251px;top:404px" width="16" height="16"><use href="#isaveeditg"/></svg>
<div class="sep" style="left:271px;top:402px;height:20px"></div>
<svg style="left:277px;top:404px" width="16" height="16"><use href="#icopyg"/></svg>
<div class="sep" style="left:298px;top:402px;height:20px"></div>
<svg style="left:305px;top:404px" width="14" height="16"><use href="#itrash"/></svg>
<div class="a" style="left:323px;top:401px;width:22px;height:22px;background:#cce4f7;border:1px solid #1e7fd8"></div>
<svg style="left:327px;top:404px" width="15" height="16"><use href="#itrashred"/></svg>
<div class="sep" style="left:347px;top:402px;height:20px"></div>
<svg style="left:354px;top:404px" width="13" height="16"><path d="M0 1h13" stroke="#a0a0a0" stroke-width="1.6"/><path d="M6.5 4v12" stroke="#a0a0a0" stroke-width="1.6"/><path d="M2.5 8L6.5 3.5L10.5 8" fill="none" stroke="#a0a0a0" stroke-width="1.6"/></svg>
<svg style="left:377px;top:404px" width="13" height="16"><path d="M0 15h13" stroke="#a0a0a0" stroke-width="1.6"/><path d="M6.5 0v12" stroke="#a0a0a0" stroke-width="1.6"/><path d="M2.5 8L6.5 12.5L10.5 8" fill="none" stroke="#a0a0a0" stroke-width="1.6"/></svg>
<div class="a" style="left:394px;top:401px;width:22px;height:22px;background:#cce4f7;border:1px solid #1e7fd8"></div>
<svg style="left:402px;top:404px" width="6" height="16"><rect x="0.5" y="0.5" width="5" height="15" rx="1" fill="#3aa0e8" stroke="#777"/><rect x="1" y="1" width="4" height="3" fill="#888"/><rect x="1" y="12" width="4" height="3" fill="#888"/><rect x="1" y="4" width="4" height="2" fill="#d8ecfa"/></svg>
<div class="sep" style="left:418px;top:402px;height:20px"></div>
<svg style="left:425px;top:405px" width="14" height="14"><path d="M1.5 1.5L12.5 12.5M12.5 1.5L1.5 12.5" stroke="#a4a4a4" stroke-width="1.8"/><path d="M0 0H5.5L0 5.5ZM14 0H8.5L14 5.5ZM0 14H5.5L0 8.5ZM14 14H8.5L14 8.5Z" fill="#a4a4a4"/></svg>
<svg style="left:446px;top:404px" width="16" height="16"><path d="M1 1L15 15M15 1L1 15" stroke="#a4a4a4" stroke-width="2"/><circle cx="8" cy="8" r="3.8" fill="#b4b4b4"/><path d="M8 4.5V11.5M4.5 8H11.5" stroke="#d8d8d8" stroke-width="1"/></svg>
<div class="sep" style="left:467px;top:402px;height:20px"></div>
<svg style="left:474px;top:404px" width="14" height="16"><path d="M0 0.5h14M0 15.5h14" stroke="#a4a4a4" stroke-width="1"/><path d="M5 5L7 2.5L9 5Z M5 11L7 13.5L9 11Z" fill="#8c8c8c"/></svg>
<svg style="left:499px;top:410px" width="6" height="3"><path d="M0 0H6L3 3Z" fill="#888"/></svg>
<div class="a" style="left:695px;top:401px;width:116px;height:22px;background:#fff;border:1px solid #b8b8b8"></div>
<svg style="left:697px;top:403px" width="17" height="17"><use href="#isearch"/></svg>

<!-- table -->
<div class="a" style="left:247px;top:428px;width:564px;height:135px;background:#fff;border:1px solid #828790"></div>
<div class="a" style="left:791px;top:429px;width:19px;height:133px;background:#f0f0f0"></div>
<div class="a" style="left:248px;top:453px;width:543px;height:1px;background:#e5e5e5"></div>
<div class="a" style="left:300px;top:429px;width:2px;height:24px;background:#ececec"></div>
<div class="a" style="left:363px;top:429px;width:2px;height:24px;background:#ececec"></div>
<div class="a" style="left:442px;top:429px;width:2px;height:24px;background:#ececec"></div>
<div class="a" style="left:497px;top:429px;width:2px;height:24px;background:#ececec"></div>
<div class="a" style="left:556px;top:429px;width:2px;height:24px;background:#ececec"></div>
<div class="a" style="left:614px;top:429px;width:2px;height:24px;background:#ececec"></div>
<div class="a" style="left:689px;top:429px;width:2px;height:24px;background:#ececec"></div>
<div class="a" style="left:790px;top:429px;width:2px;height:24px;background:#ececec"></div>
<span class="lbl" style="left:252px;top:435px">Time</span>
<span class="lbl" style="left:306px;top:435px">Status</span>
<span class="lbl" style="left:369px;top:435px">Command</span>
<span class="lbl" style="left:448px;top:435px">Exec</span>
<span class="lbl" style="left:503px;top:435px">Fetch</span>
<span class="lbl" style="left:562px;top:435px">Rows</span>
<span class="lbl" style="left:620px;top:435px">Message</span>
<span class="lbl" style="left:695px;top:435px">SQL/Command</span>

<div class="a" style="left:439px;top:485px;width:180px;height:20px;background:#b2b2b2;border-radius:7px;border:1px solid #d8d8d8"></div>
<span class="lbl" style="left:452px;top:488px;color:#f6f6f6;letter-spacing:0;-webkit-text-stroke:0">There are no current log entries</span>

<!-- bottom status -->
<div class="cell" style="left:247px;top:565px;width:507px;height:20px"></div>
<span class="lbl" style="left:620px;top:568px">0s</span>
<span class="lbl" style="left:641px;top:568px">0 of 0</span>
<svg style="left:690px;top:567px" width="16" height="16"><circle cx="8" cy="8" r="7.6" fill="#b4b4b4"/><path d="M3.8 8.2L6.7 11L12.2 5" fill="none" stroke="#fff" stroke-width="2.2"/></svg>
<span class="lbl" style="left:709px;top:568px;color:#999">0</span>
<svg style="left:726px;top:567px" width="16" height="16"><circle cx="8" cy="8" r="7.6" fill="#b0b0b0"/><path d="M5 5L11 11M11 5L5 11" stroke="#fff" stroke-width="2.2"/></svg>
<span class="lbl" style="left:745px;top:568px;color:#999">0</span>
<div class="cell" style="left:757px;top:565px;width:26px;height:20px"></div>
<span class="lbl" style="left:761px;top:568px">0/8</span>
<div class="cell" style="left:785px;top:565px;width:26px;height:20px"></div>
<span class="lbl" style="left:789px;top:568px">0-0</span>

<div class="a" style="left:638px;top:587px;width:20px;height:1px;background:#9a9a9a"></div>
<div class="a" style="left:660px;top:587px;width:21px;height:1px;background:#9a9a9a"></div>
<div class="a" style="left:682px;top:587px;width:20px;height:1px;background:#9a9a9a"></div>
<div class="a" style="left:704px;top:587px;width:20px;height:1px;background:#9a9a9a"></div>

</body></html>
